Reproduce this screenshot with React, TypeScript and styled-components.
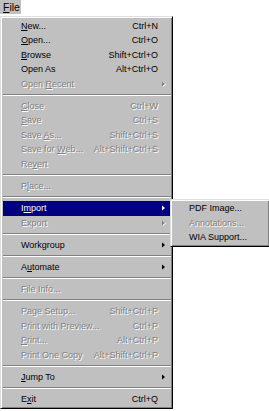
import React from 'react';
import styled, { createGlobalStyle, css } from 'styled-components';

const GlobalStyle = createGlobalStyle`
  html, body {
    margin: 0;
    padding: 0;
    background: #fff;
    overflow: hidden;
  }
  body {
    font-family: "Liberation Sans", Arial, sans-serif;
    font-size: 9px;
    color: #000;
  }
`;

const Screen = styled.div`
  position: relative;
  width: 269px;
  height: 411px;
  overflow: hidden;
`;

const MenuBar = styled.div`
  display: flex;
  height: 16px;
`;

const MenuTitle = styled.div`
  width: 21px;
  height: 14px;
  box-sizing: border-box;
  padding-left: 3px;
  font-size: 10.5px;
  line-height: 14px;
  background: #c0c0c0;
`;

const Panel = styled.div`
  box-sizing: border-box;
  background: #c0c0c0;
  border: 1px solid;
  border-color: #dfdfdf #000 #000 #dfdfdf;
  box-shadow: inset 1px 1px #fff, inset -1px -1px #808080;
  padding: 1.5px;
`;

const Menu = styled(Panel)`
  width: 173px;
`;

const SubMenu = styled(Panel)`
  position: absolute;
  left: 167px;
  top: -2.5px;
  width: 100px;
  z-index: 2;
`;

const disabledText = css`
  color: #808080;
  text-shadow: 1px 1px 0 #fff;
`;

const Item = styled.div<{ $active?: boolean; $disabled?: boolean; $indent?: number }>`
  position: relative;
  display: grid;
  grid-template-columns: 1fr auto 12.5px;
  align-items: center;
  height: 14.5px;
  line-height: 14.5px;
  padding-left: ${p => p.$indent ?? 18.5}px;
  white-space: nowrap;
  color: #000;
  ${p => p.$disabled && disabledText}
  ${p =>
    p.$active &&
    css`
      background: #000080;
      color: #fff;
    `}
`;

const Shortcut = styled.span`
  text-align: right;
`;

const Arrow = styled.span`
  display: flex;
  align-items: center;
  padding-left: 4px;
  height: 100%;
`;

const Separator = styled.div`
  display: flex;
  align-items: center;
  height: 7.7px;
`;

const Rule = styled.div`
  flex: 1;
  border-top: 1px solid #808080;
  border-bottom: 1px solid #fff;
`;

type Entry =
  | { sep: true }
  | {
      label: string;
      shortcut?: string;
      sub?: boolean;
      disabled?: boolean;
      active?: boolean;
    };

const fileMenu: Entry[] = [
  { label: '&New...', shortcut: 'Ctrl+N' },
  { label: '&Open...', shortcut: 'Ctrl+O' },
  { label: '&Browse', shortcut: 'Shift+Ctrl+O' },
  { label: 'Open As', shortcut: 'Alt+Ctrl+O' },
  { label: 'Open &Recent', sub: true, disabled: true },
  { sep: true },
  { label: '&Close', shortcut: 'Ctrl+W', disabled: true },
  { label: '&Save', shortcut: 'Ctrl+S', disabled: true },
  { label: 'Save &As...', shortcut: 'Shift+Ctrl+S', disabled: true },
  { label: 'Save for &Web...', shortcut: 'Alt+Shift+Ctrl+S', disabled: true },
  { label: 'Re&vert', disabled: true },
  { sep: true },
  { label: 'P&lace...', disabled: true },
  { sep: true },
  { label: 'I&mport', sub: true, active: true },
  { label: 'Export', sub: true, disabled: true },
  { sep: true },
  { label: 'Workgroup', sub: true },
  { sep: true },
  { label: 'A&utomate', sub: true },
  { sep: true },
  { label: 'File Info...', disabled: true },
  { sep: true },
  { label: 'Page Setup...', shortcut: 'Shift+Ctrl+P', disabled: true },
  { label: 'Print with Preview...', shortcut: 'Ctrl+P', disabled: true },
  { label: '&Print...', shortcut: 'Alt+Ctrl+P', disabled: true },
  { label: 'Print One Copy', shortcut: 'Alt+Shift+Ctrl+P', disabled: true },
  { sep: true },
  { label: '&Jump To', sub: true },
  { sep: true },
  { label: 'E&xit', shortcut: 'Ctrl+Q' },
];

const importMenu = [
  { label: 'PDF Image...' },
  { label: 'Annotations...', disabled: true },
  { label: 'WIA Support...' },
];

// "&" marks the mnemonic letter
function Mnemonic({ text }: { text: string }) {
  const i = text.indexOf('&');
  if (i < 0) return <>{text}</>;
  return (
    <>
      {text.slice(0, i)}
      <u>{text[i + 1]}</u>
      {text.slice(i + 2)}
    </>
  );
}

function SubArrow({ disabled }: { disabled?: boolean }) {
  return (
    <svg width="4" height="6" viewBox="0 0 4 6">
      {disabled && <polygon points="1,1 4,3.5 1,6" fill="#fff" />}
      <polygon points="0,0.5 3,3 0,5.5" fill="currentColor" />
    </svg>
  );
}

export default function App() {
  return (
    <Screen>
      <GlobalStyle />
      <MenuBar>
        <MenuTitle>
          <Mnemonic text="&File" />
        </MenuTitle>
      </MenuBar>
      <Menu>
        {fileMenu.map((entry, index) =>
          'sep' in entry ? (
            <Separator key={index}>
              <Rule />
            </Separator>
          ) : (
            <Item key={index} $active={entry.active} $disabled={entry.disabled}>
              <span>
                <Mnemonic text={entry.label} />
              </span>
              <Shortcut>{entry.shortcut}</Shortcut>
              <Arrow>{entry.sub && <SubArrow disabled={entry.disabled} />}</Arrow>
              {entry.active && (
                <SubMenu>
                  {importMenu.map((sub, j) => (
                    <Item key={j} $disabled={sub.disabled} $indent={17}>
                      <span>{sub.label}</span>
                      <Shortcut />
                      <Arrow />
                    </Item>
                  ))}
                </SubMenu>
              )}
            </Item>
          )
        )}
      </Menu>
    </Screen>
  );
}
